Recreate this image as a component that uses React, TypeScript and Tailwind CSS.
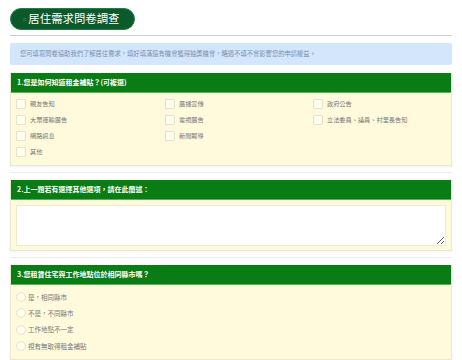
import React from "react";

const font = { fontFamily: '"Noto Sans CJK TC", "Noto Sans", sans-serif' };

function Checkbox({ label }: { label: string }) {
  return (
    <div className="flex h-[16px] items-center">
      <span className="block h-[10px] w-[10px] rounded-[1px] border border-[#e6e2c8] bg-[#fffdf0]" />
      <span className="ml-[4px] text-[6.2px] leading-none text-[#777]">{label}</span>
    </div>
  );
}

function Radio({ label }: { label: string }) {
  return (
    <div className="flex h-[16.3px] items-center">
      <span className="block h-[10px] w-[10px] rounded-full border border-[#e6e2c8] bg-[#fffdf0]" />
      <span className="ml-[2px] text-[6.5px] leading-none text-[#777]">{label}</span>
    </div>
  );
}

function Header({ text }: { text: string }) {
  return (
    <div className="flex h-[20px] items-center border-b border-[#5fae5f] bg-[#0a7c16] pl-[6px]">
      <span className="text-[7px] font-bold leading-none text-white">{text}</span>
    </div>
  );
}

export default function App() {
  return (
    <div className="min-h-[360px] w-[462px] bg-white" style={font}>
      <div className="px-[10px] pt-[8px]">
        <div className="flex h-[22px] w-[125px] items-center rounded-full border border-[#2a7a48] bg-[#0b5a2b] pl-[12px]">
          <span className="text-[6px] leading-none text-[#8fb59b]">::</span>
          <span className="ml-[2px] text-[11.4px] leading-none text-white">居住需求問卷調查</span>
        </div>
        <div className="mt-[5px] h-px bg-[#cfcfcf]" />
        <div className="mt-[7px] flex h-[22px] items-center rounded-[2px] bg-[#d3e6fc] pl-[10px]">
          <span className="text-[6.3px] leading-none text-[#7a8fae]">
            您可填寫問卷協助我們了解居住需求，填好填滿還有機會獲得抽獎機會，略過不填不會影響您的申請權益。
          </span>
        </div>

        <div className="mt-[8px] border-x border-b border-[#ece8cf] shadow-[0_1px_2px_rgba(0,0,0,0.06)]">
          <Header text="1.您是如何知道租金補貼？(可複選)" />
          <div className="bg-[#fffadc] pb-[5px] pl-[5px] pt-[3px]">
            <div className="grid grid-cols-[149px_148px_1fr]">
              <Checkbox label="親友告知" />
              <Checkbox label="廣播宣傳" />
              <Checkbox label="政府公告" />
              <Checkbox label="大眾運輸廣告" />
              <Checkbox label="電視廣告" />
              <Checkbox label="立法委員、議員、村里長告知" />
              <Checkbox label="網路訊息" />
              <Checkbox label="新聞報導" />
              <div />
              <Checkbox label="其他" />
            </div>
          </div>
        </div>

        <div className="mb-[7px] mt-[6px] h-px bg-[#ececec]" />

        <div className="border-x border-b border-[#ece8cf] shadow-[0_1px_2px_rgba(0,0,0,0.06)]">
          <Header text="2.上一題若有選擇其他選項，請在此簡述：" />
          <div className="bg-[#fffadc] px-[5px] pb-[4px] pt-[5px]">
            <textarea className="block h-[41px] w-full resize-y border border-[#f0ecd0] bg-white outline-none" />
          </div>
        </div>

        <div className="mb-[7px] mt-[6px] h-px bg-[#ececec]" />

        <div className="border-x border-b border-[#ece8cf] shadow-[0_1px_2px_rgba(0,0,0,0.06)]">
          <Header text="3.您租賃住宅與工作地點位於相同縣市嗎？" />
          <div className="bg-[#fffadc] pb-[5px] pl-[5px] pt-[4px]">
            <Radio label="是，相同縣市" />
            <Radio label="不是，不同縣市" />
            <Radio label="工作地點不一定" />
            <Radio label="視有無取得租金補貼" />
          </div>
        </div>
      </div>
    </div>
  );
}
